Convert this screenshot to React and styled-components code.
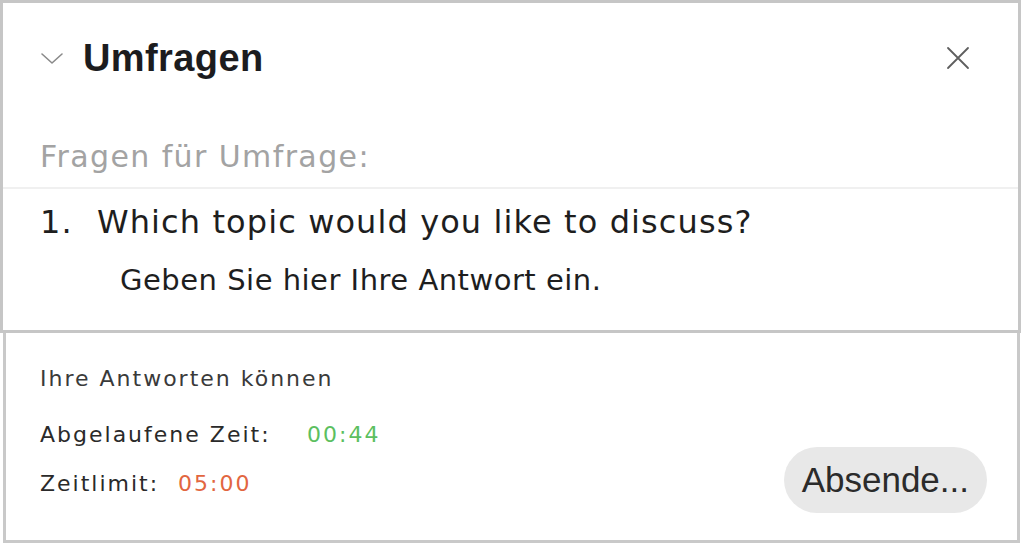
import React from 'react';
import styled, { createGlobalStyle } from 'styled-components';

const GlobalStyle = createGlobalStyle`
  html, body {
    margin: 0;
    padding: 0;
    background: #ffffff;
  }
  body {
    font-family: "DejaVu Sans", sans-serif;
    color: #222222;
  }
`;

const Page = styled.div`
  width: 1024px;
  height: 543px;
  display: flex;
  flex-direction: column;
  box-sizing: border-box;
`;

const PollPanel = styled.section`
  width: 1021px;
  height: 333px;
  box-sizing: border-box;
  border: 3px solid #c6c6c6;
  display: flex;
  flex-direction: column;
`;

const Header = styled.div`
  height: 110px;
  display: flex;
  align-items: center;
  padding: 0 48px 0 37px;
  box-sizing: border-box;
`;

const Collapse = styled.button`
  border: 0;
  background: none;
  padding: 0;
  margin-right: 19px;
  display: flex;
  align-items: center;
  color: #8a8a8a;
`;

const Title = styled.h1`
  margin: 0;
  flex: 1;
  font-family: "Liberation Sans", Arial, sans-serif;
  font-weight: 700;
  font-size: 38px;
  letter-spacing: 0.4px;
  color: #1c1c1e;
`;

const Close = styled.button`
  border: 0;
  background: none;
  padding: 0;
  display: flex;
  color: #5e5e5e;
`;

const SectionLabel = styled.div`
  padding: 0 37px 13px;
  height: 76px;
  display: flex;
  align-items: flex-end;
  font-size: 30px;
  letter-spacing: 1.4px;
  color: #a3a3a3;
  border-bottom: 2px solid #f0f0f0;
  box-sizing: border-box;
`;

const Question = styled.div`
  display: flex;
  padding: 14px 37px 0;
  font-size: 32px;
  letter-spacing: 1.1px;
  color: #1e1e1e;
`;

const Number = styled.span`
  width: 57px;
`;

const Answer = styled.div`
  padding: 22px 0 0 117px;
  font-size: 29px;
  letter-spacing: 0.5px;
  color: #1e1e1e;
`;

const StatusPanel = styled.section`
  margin-left: 3px;
  width: 1017px;
  flex: 1;
  box-sizing: border-box;
  border: 3px solid #c9c9c9;
  border-top: 0;
  display: flex;
  padding: 33px 30px 27px 34px;
`;

const Info = styled.div`
  flex: 1;
  display: flex;
  flex-direction: column;
  font-size: 22px;
  line-height: 26px;
  letter-spacing: 2px;
  color: #2a2a2a;
`;

const Note = styled.div`
  margin-bottom: 30px;
  color: #3a3a3a;
`;

const Row = styled.div`
  display: flex;
  margin-bottom: ${(props) => props.gap}px;
`;

const Label = styled.span`
  width: ${(props) => props.width}px;
`;

const Time = styled.span`
  color: ${(props) => props.color};
`;

const SendButton = styled.button`
  align-self: flex-end;
  height: 66px;
  padding: 0 18px;
  border: 0;
  border-radius: 33px;
  background: #e8e8e8;
  font-family: "Liberation Sans", Arial, sans-serif;
  font-size: 35px;
  color: #2b2b2b;
`;

function ChevronDown() {
  return (
    <svg width="24" height="14" viewBox="0 0 24 14" fill="none" stroke="currentColor" strokeWidth="1.6" strokeLinecap="round" strokeLinejoin="round">
      <path d="M2 3 L12 12 L22 3" />
    </svg>
  );
}

function CloseIcon() {
  return (
    <svg width="24" height="24" viewBox="0 0 24 24" fill="none" stroke="currentColor" strokeWidth="1.8" strokeLinecap="round">
      <path d="M2 2 L22 22 M22 2 L2 22" />
    </svg>
  );
}

export default function App() {
  return (
    <Page>
      <GlobalStyle />
      <PollPanel>
        <Header>
          <Collapse aria-label="Einklappen"><ChevronDown /></Collapse>
          <Title>Umfragen</Title>
          <Close aria-label="Schließen"><CloseIcon /></Close>
        </Header>
        <SectionLabel>Fragen für Umfrage:</SectionLabel>
        <Question>
          <Number>1.</Number>
          <span>Which topic would you like to discuss?</span>
        </Question>
        <Answer>Geben Sie hier Ihre Antwort ein.</Answer>
      </PollPanel>
      <StatusPanel>
        <Info>
          <Note>Ihre Antworten können</Note>
          <Row gap={23}>
            <Label width={267}>Abgelaufene Zeit:</Label>
            <Time color="#5cbf60">00:44</Time>
          </Row>
          <Row gap={0}>
            <Label width={138}>Zeitlimit:</Label>
            <Time color="#e2663f">05:00</Time>
          </Row>
        </Info>
        <SendButton>Absende...</SendButton>
      </StatusPanel>
    </Page>
  );
}
